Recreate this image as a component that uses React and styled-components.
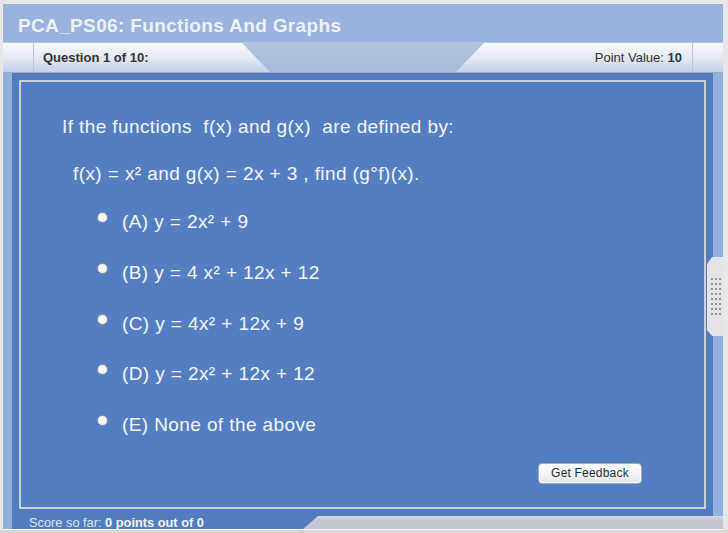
import React from "react";
import styled, { createGlobalStyle } from "styled-components";

const GlobalStyle = createGlobalStyle`
  html, body { margin: 0; padding: 0; background: #e7e7e7; }
  body { font-family: "Liberation Sans", Arial, sans-serif; }
`;

const Page = styled.div`
  width: 728px;
  height: 533px;
  box-sizing: border-box;
  padding: 4px 5px 0 3px;
  display: flex;
  flex-direction: column;
  background: #e7e7e7;
`;

const Window = styled.div`
  width: 720px;
  display: flex;
  flex-direction: column;
  border-bottom: 1px solid #f7f7f7;
`;

const BottomEdge = styled.div`
  height: 3px;
  margin: 0 -5px 0 -3px;
  background: #d8d5ce;
`;

const TitleBar = styled.div`
  height: 39px;
  box-sizing: border-box;
  padding: 11px 0 0 15px;
  background: #99b3dd;
  border-bottom: 1px solid #b3c6e5;
  color: #edf2fa;
  font-size: 19px;
  line-height: 22px;
  font-weight: bold;
  letter-spacing: 0.35px;
`;

const tabGradient = `linear-gradient(#f7f9fc 0%, #e9edf5 40%, #c7d1e4 100%)`;

const TabBar = styled.div`
  height: 30px;
  box-sizing: border-box;
  display: flex;
  background: linear-gradient(#b3c3de, #a8bad9);
  border-bottom: 1px solid #98abcd;
  font-size: 13px;
  color: #333;
`;

const Cap = styled.div`
  width: 31px;
  flex: none;
  background: ${tabGradient};
  border-${(p) => (p.$side === "left" ? "right" : "left")}: 1px solid #bcc6d8;
  box-sizing: border-box;
`;

const Tab = styled.div`
  width: 236px;
  flex: none;
  box-sizing: border-box;
  background: ${tabGradient};
  padding-top: 3px;
  line-height: 23px;
  display: flex;
  justify-content: ${(p) => (p.$align === "right" ? "flex-end" : "flex-start")};
  padding-left: ${(p) => (p.$align === "right" ? "0" : "9px")};
  padding-right: ${(p) => (p.$align === "right" ? "10px" : "0")};
  clip-path: ${(p) =>
    p.$align === "right"
      ? "polygon(28px 0, 100% 0, 100% 100%, 0 100%)"
      : "polygon(0 0, 208px 0, 236px 100%, 0 100%)"};
`;

const TabSpacer = styled.div`
  flex: 1;
`;

const Bold = styled.b`
  font-weight: bold;
`;

const Body = styled.div`
  height: 456px;
  display: flex;
`;

const SideStrip = styled.div`
  width: ${(p) => p.$w}px;
  flex: none;
  background: #93b1df;
`;

const Content = styled.div`
  flex: 1;
  display: flex;
  flex-direction: column;
`;

const MainRow = styled.div`
  height: 443px;
  display: flex;
  position: relative;
`;

const Frame = styled.div`
  flex: 1;
  box-sizing: border-box;
  padding: 7px;
  background: #537bbf;
  display: flex;
`;

const Panel = styled.div`
  flex: 1;
  box-sizing: border-box;
  border: 2px solid #c9d0dc;
  background: #557ec2;
  padding: 34px 62px 0 41px;
  display: flex;
  flex-direction: column;
  color: #f3f6fb;
  font-size: 19px;
  letter-spacing: 0.4px;
  line-height: 21px;
`;

const Line = styled.div`
  white-space: pre;
  margin-top: ${(p) => p.$mt || 0}px;
  padding-left: ${(p) => p.$indent || 0}px;
`;

const Option = styled.label`
  display: flex;
  align-items: flex-start;
  margin-top: ${(p) => p.$mt}px;
  padding-left: 35px;
  white-space: pre;
  cursor: pointer;
`;

const Radio = styled.span`
  width: 11px;
  height: 11px;
  box-sizing: border-box;
  margin-top: 1px;
  margin-right: 14px;
  border-radius: 50%;
  border: 1px solid #8d939c;
  background: radial-gradient(circle at 40% 40%, #ffffff 45%, #d9dce2 100%);
  flex: none;
`;

const ButtonRow = styled.div`
  display: flex;
  justify-content: flex-end;
  margin-top: 28px;
`;

const FeedbackButton = styled.button`
  width: 104px;
  height: 21px;
  box-sizing: border-box;
  padding: 0;
  border: 1px solid #a0a8b2;
  border-radius: 4px;
  background: linear-gradient(#ffffff, #f1f2f5 60%, #e3e6ea);
  box-shadow: inset 0 0 0 1px #fdfdfd;
  font-family: "Liberation Sans", Arial, sans-serif;
  font-size: 12px;
  letter-spacing: 0.2px;
  line-height: 19px;
  color: #15303f;
  cursor: pointer;
`;

const Handle = styled.div`
  position: absolute;
  right: 0;
  top: 184px;
  width: 16px;
  height: 79px;
  box-sizing: border-box;
  padding: 21px 0 0 4px;
  background: #e2e4e7;
  clip-path: polygon(5px 0, 100% 0, 100% 100%, 5px 100%, 0 calc(100% - 6px), 0 7px);
`;

const Dots = styled.div`
  display: grid;
  grid-template-columns: repeat(3, 2px);
  grid-auto-rows: 2px;
  column-gap: 2px;
  row-gap: 3px;
`;

const Dot = styled.span`
  background: #8e9298;
`;

const Footer = styled.div`
  height: 13px;
  display: flex;
  background: #537bbf;
`;

const Score = styled.div`
  flex: 1;
  padding-left: 17px;
  font-size: 12.8px;
  line-height: 13px;
  color: #dce5f4;
  white-space: pre;
`;

const ScoreValue = styled.b`
  color: #f2f5fb;
`;

const GreyBar = styled.div`
  width: 420px;
  flex: none;
  background: linear-gradient(#d6d9df, #c4c7cf 35%, #c2c5cd);
  clip-path: polygon(15px 0, 100% 0, 100% 100%, 0 100%);
`;

const options = [
  <>(A) y = 2x² + 9</>,
  <>(B) y = 4 x² + 12x + 12</>,
  <>(C) y = 4x² + 12x + 9</>,
  <>(D) y = 2x² + 12x + 12</>,
  <>(E) None of the above</>,
];

export default function App() {
  return (
    <>
      <GlobalStyle />
      <Page>
        <Window>
          <TitleBar>PCA_PS06: Functions And Graphs</TitleBar>
          <TabBar>
            <Cap $side="left" />
            <Tab>
              <Bold>Question 1 of 10:</Bold>
            </Tab>
            <TabSpacer />
            <Tab $align="right">
              <span>
                Point Value: <Bold>10</Bold>
              </span>
            </Tab>
            <Cap $side="right" />
          </TabBar>
          <Body>
            <SideStrip $w={9} />
            <Content>
              <MainRow>
                <Frame>
                  <Panel>
                    <Line>{"If the functions  f(x) and g(x)  are defined by:"}</Line>
                    <Line $mt={26} $indent={11}>
                      {"f(x) = x² and g(x) = 2x + 3 , find (g°f)(x)."}
                    </Line>
                    {options.map((o, i) => (
                      <Option key={i} $mt={i === 0 ? 27 : 29.75}>
                        <Radio />
                        <span>{o}</span>
                      </Option>
                    ))}
                    <ButtonRow>
                      <FeedbackButton>Get Feedback</FeedbackButton>
                    </ButtonRow>
                  </Panel>
                </Frame>
                <SideStrip $w={10} />
                <Handle>
                  <Dots>
                    {Array.from({ length: 24 }).map((_, i) => (
                      <Dot key={i} />
                    ))}
                  </Dots>
                </Handle>
              </MainRow>
              <Footer>
                <Score>
                  {"Score so far: "}
                  <ScoreValue>0 points out of 0</ScoreValue>
                </Score>
                <GreyBar />
              </Footer>
            </Content>
          </Body>
        </Window>
        <BottomEdge />
      </Page>
    </>
  );
}
